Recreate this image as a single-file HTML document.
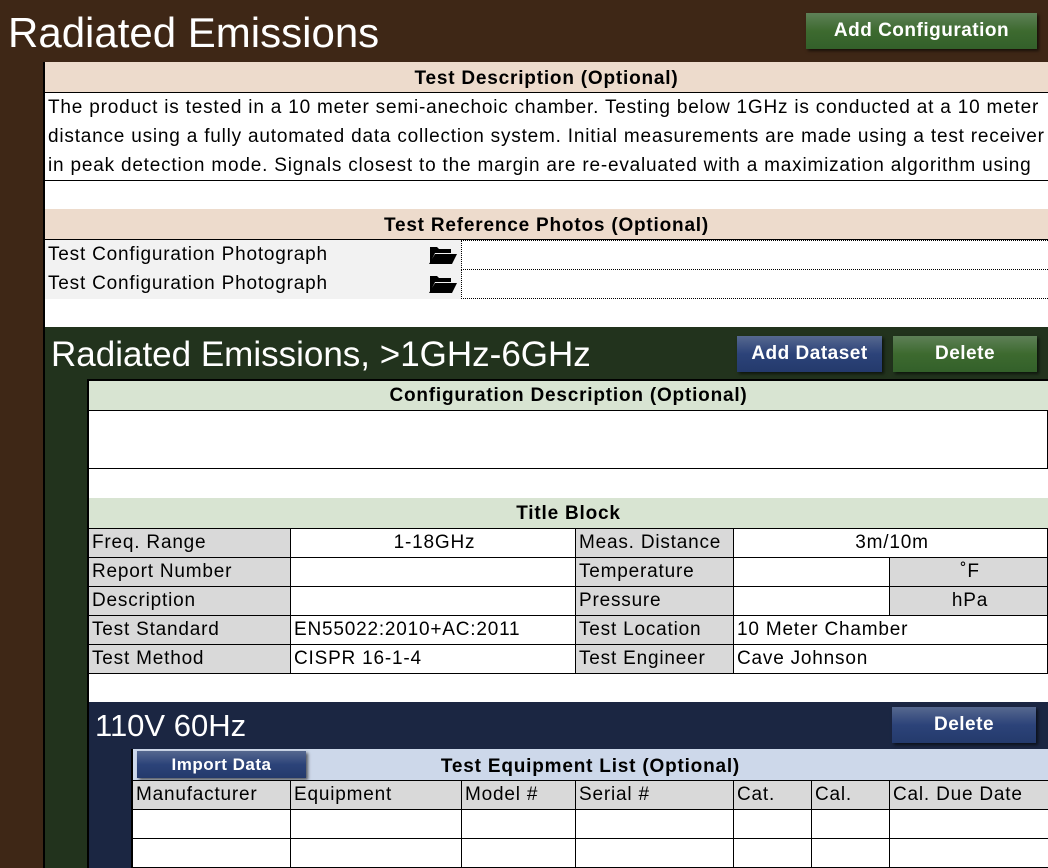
<!DOCTYPE html>
<html><head><meta charset="utf-8"><style>
*{margin:0;padding:0;box-sizing:border-box}
body{width:1048px;height:868px;overflow:hidden;background:#fff;font-family:"Liberation Sans",sans-serif;font-size:19px;letter-spacing:0.8px;color:#000;position:relative}
.a{position:absolute}
.c{position:absolute;white-space:nowrap;overflow:hidden;line-height:28px;padding-left:3px}
.g{background:#d9d9d9}
.h{font-weight:bold;text-align:center;white-space:nowrap}
.btn{position:absolute;color:#fff;font-weight:bold;text-align:center;box-shadow:2px 2px 3px rgba(0,0,0,.6);letter-spacing:0.5px}
.bg{background:linear-gradient(#5e8057,#3d6a2f 50%,#33602a)}
.bb{background:linear-gradient(#56688f,#2c4379 50%,#243a6c)}
.t{letter-spacing:0}
</style></head><body>
<div class="a" style="left:0;top:0;width:1048px;height:868px;background:#3e2716"></div>
<div class="a t" style="left:8px;top:7px;font-size:42px;color:#fff;line-height:52px">Radiated Emissions</div>
<div class="btn bg" style="left:806px;top:13px;width:231px;height:36px;line-height:36px">Add Configuration</div>
<div class="a" style="left:43px;top:62px;width:1005px;height:806px;background:#fff;border-left:2px solid #000"></div>
<div class="a h" style="left:45px;top:62px;width:1003px;height:31px;background:#eddbcc;border-bottom:1px solid #000;line-height:34px">Test Description (Optional)</div>
<div class="a" style="left:45px;top:93px;width:1003px;height:88px;border-bottom:1px solid #000;overflow:hidden;white-space:nowrap;padding-left:3px;line-height:29px">The product is tested in a 10 meter semi-anechoic chamber. Testing below 1GHz is conducted at a 10 meter<br>distance using a fully automated data collection system. Initial measurements are made using a test receiver<br>in peak detection mode. Signals closest to the margin are re-evaluated with a maximization algorithm using</div>
<div class="a h" style="left:45px;top:209px;width:1003px;height:31px;background:#eddbcc;border-bottom:1px solid #000;line-height:34px">Test Reference Photos (Optional)</div>
<div class="a" style="left:45px;top:240px;width:416px;height:59px;background:#f2f2f2"></div>
<div class="c" style="left:45px;top:241px">Test Configuration Photograph</div>
<div class="c" style="left:45px;top:270px">Test Configuration Photograph</div>
<svg class="a" style="left:428px;top:245px" width="30" height="20" viewBox="0 0 30 20"><path d="M2 2h7l2 2h12v4H7L2 18z M7 9h22l-5 10H1z" fill="#000"/></svg>
<svg class="a" style="left:428px;top:274px" width="30" height="20" viewBox="0 0 30 20"><path d="M2 2h7l2 2h12v4H7L2 18z M7 9h22l-5 10H1z" fill="#000"/></svg>
<div class="a" style="left:461px;top:240px;width:587px;height:30px;border:1px dotted #000;border-right:none"></div>
<div class="a" style="left:461px;top:269px;width:587px;height:30px;border:1px dotted #000;border-right:none"></div>
<div class="a" style="left:45px;top:327px;width:1003px;height:541px;background:#22331d"></div>
<div class="a t" style="left:51px;top:332px;font-size:35px;color:#fff;line-height:45px">Radiated Emissions, &gt;1GHz-6GHz</div>
<div class="btn bb" style="left:737px;top:336px;width:145px;height:36px;line-height:36px">Add Dataset</div>
<div class="btn bg" style="left:893px;top:336px;width:144px;height:36px;line-height:36px">Delete</div>
<div class="a" style="left:87px;top:379px;width:961px;height:489px;background:#fff;border-left:2px solid #000;border-top:2px solid #000"></div>
<div class="a h" style="left:89px;top:381px;width:959px;height:30px;background:#d8e4d2;border-bottom:1px solid #000;line-height:30px">Configuration Description (Optional)</div>
<div class="a" style="left:89px;top:411px;width:959px;height:58px;border-bottom:1px solid #000;border-right:1px solid #000"></div>
<div class="a h" style="left:89px;top:498px;width:959px;height:31px;background:#d8e4d2;border-bottom:1px solid #000;line-height:32px">Title Block</div>
<div class="c g" style="left:89px;top:529px;width:202px;height:29px;border-right:1px solid #000;border-bottom:1px solid #000">Freq. Range</div>
<div class="c" style="left:291px;top:529px;width:285px;height:29px;border-right:1px solid #000;border-bottom:1px solid #000;text-align:center">1-18GHz</div>
<div class="c g" style="left:576px;top:529px;width:158px;height:29px;border-right:1px solid #000;border-bottom:1px solid #000">Meas. Distance</div>
<div class="c" style="left:734px;top:529px;width:314px;height:29px;border-right:1px solid #000;border-bottom:1px solid #000;text-align:center">3m/10m</div>
<div class="c g" style="left:89px;top:558px;width:202px;height:29px;border-right:1px solid #000;border-bottom:1px solid #000">Report Number</div>
<div class="c" style="left:291px;top:558px;width:285px;height:29px;border-right:1px solid #000;border-bottom:1px solid #000"></div>
<div class="c g" style="left:576px;top:558px;width:158px;height:29px;border-right:1px solid #000;border-bottom:1px solid #000">Temperature</div>
<div class="c" style="left:734px;top:558px;width:156px;height:29px;border-right:1px solid #000;border-bottom:1px solid #000"></div>
<div class="c g" style="left:890px;top:558px;width:158px;height:29px;border-right:1px solid #000;border-bottom:1px solid #000;text-align:center">˚F</div>
<div class="c g" style="left:89px;top:587px;width:202px;height:29px;border-right:1px solid #000;border-bottom:1px solid #000">Description</div>
<div class="c" style="left:291px;top:587px;width:285px;height:29px;border-right:1px solid #000;border-bottom:1px solid #000"></div>
<div class="c g" style="left:576px;top:587px;width:158px;height:29px;border-right:1px solid #000;border-bottom:1px solid #000">Pressure</div>
<div class="c" style="left:734px;top:587px;width:156px;height:29px;border-right:1px solid #000;border-bottom:1px solid #000"></div>
<div class="c g" style="left:890px;top:587px;width:158px;height:29px;border-right:1px solid #000;border-bottom:1px solid #000;text-align:center">hPa</div>
<div class="c g" style="left:89px;top:616px;width:202px;height:29px;border-right:1px solid #000;border-bottom:1px solid #000">Test Standard</div>
<div class="c" style="left:291px;top:616px;width:285px;height:29px;border-right:1px solid #000;border-bottom:1px solid #000">EN55022:2010+AC:2011</div>
<div class="c g" style="left:576px;top:616px;width:158px;height:29px;border-right:1px solid #000;border-bottom:1px solid #000">Test Location</div>
<div class="c" style="left:734px;top:616px;width:314px;height:29px;border-right:1px solid #000;border-bottom:1px solid #000">10 Meter Chamber</div>
<div class="c g" style="left:89px;top:645px;width:202px;height:29px;border-right:1px solid #000;border-bottom:1px solid #000">Test Method</div>
<div class="c" style="left:291px;top:645px;width:285px;height:29px;border-right:1px solid #000;border-bottom:1px solid #000">CISPR 16-1-4</div>
<div class="c g" style="left:576px;top:645px;width:158px;height:29px;border-right:1px solid #000;border-bottom:1px solid #000">Test Engineer</div>
<div class="c" style="left:734px;top:645px;width:314px;height:29px;border-right:1px solid #000;border-bottom:1px solid #000">Cave Johnson</div>
<div class="a" style="left:89px;top:702px;width:959px;height:166px;background:#1b2642"></div>
<div class="a t" style="left:95px;top:705px;font-size:31px;color:#fff;line-height:41px">110V 60Hz</div>
<div class="btn bb" style="left:892px;top:707px;width:144px;height:36px;line-height:36px">Delete</div>
<div class="a" style="left:131px;top:749px;width:917px;height:119px;background:#fff;border-left:2px solid #000"></div>
<div class="a h" style="left:133px;top:749px;width:915px;height:32px;background:#cdd8ea;border-bottom:1px solid #000;line-height:36px">Test Equipment List (Optional)</div>
<div class="btn bb" style="left:137px;top:751px;width:169px;height:27px;line-height:27px;font-size:17px">Import Data</div>
<div class="c g" style="left:133px;top:781px;width:158px;height:29px;border-right:1px solid #000;border-bottom:1px solid #000">Manufacturer</div>
<div class="c g" style="left:291px;top:781px;width:171px;height:29px;border-right:1px solid #000;border-bottom:1px solid #000">Equipment</div>
<div class="c g" style="left:462px;top:781px;width:114px;height:29px;border-right:1px solid #000;border-bottom:1px solid #000">Model #</div>
<div class="c g" style="left:576px;top:781px;width:158px;height:29px;border-right:1px solid #000;border-bottom:1px solid #000">Serial #</div>
<div class="c g" style="left:734px;top:781px;width:78px;height:29px;border-right:1px solid #000;border-bottom:1px solid #000">Cat.</div>
<div class="c g" style="left:812px;top:781px;width:78px;height:29px;border-right:1px solid #000;border-bottom:1px solid #000">Cal.</div>
<div class="c g" style="left:890px;top:781px;width:158px;height:29px;border-bottom:1px solid #000">Cal. Due Date</div>
<div class="a" style="left:133px;top:810px;width:915px;height:58px;background:
linear-gradient(#000,#000) 0 28px/100% 1px no-repeat,
linear-gradient(#000,#000) 0 57px/100% 1px no-repeat,
linear-gradient(#000,#000) 157px 0/1px 100% no-repeat,
linear-gradient(#000,#000) 328px 0/1px 100% no-repeat,
linear-gradient(#000,#000) 442px 0/1px 100% no-repeat,
linear-gradient(#000,#000) 600px 0/1px 100% no-repeat,
linear-gradient(#000,#000) 678px 0/1px 100% no-repeat,
linear-gradient(#000,#000) 756px 0/1px 100% no-repeat"></div>
</body></html>
